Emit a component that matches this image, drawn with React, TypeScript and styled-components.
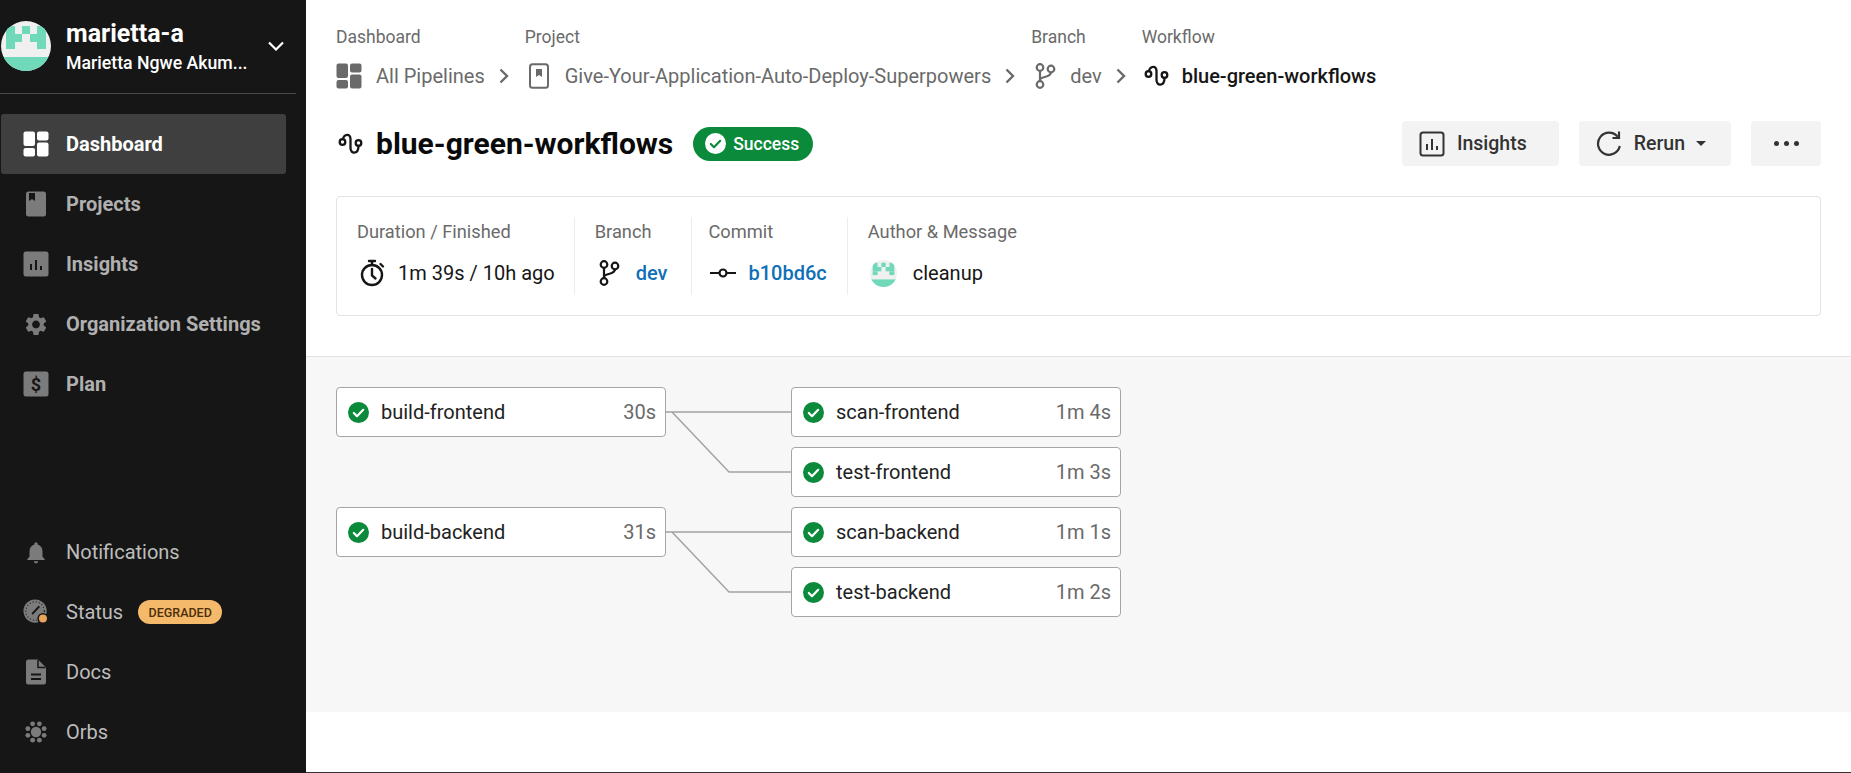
import React from 'react';
import styled, { createGlobalStyle } from 'styled-components';
import { MdNotifications, MdSettings } from 'react-icons/md';

const GREEN = '#0b8a3c';

const GlobalStyle = createGlobalStyle`
  html, body {
    margin: 0;
    padding: 0;
    height: 100%;
    background: #fff;
    overflow: hidden;
    font-family: Roboto, "Liberation Sans", sans-serif;
  }
`;

// identicon cells: [x, y, w, h] in a 50 unit box
const avatarCells = [
  [5, 5, 9, 8],
  [21, 5, 8, 8],
  [36, 5, 9, 8],
  [5, 13, 16, 8],
  [29, 13, 16, 8],
  [5, 21, 9, 7],
  [36, 21, 9, 7],
  [0, 36, 50, 14],
];

function Avatar({ size }: { size: number }) {
  return (
    <svg width={size} height={size} viewBox="0 0 50 50">
      <defs>
        <clipPath id={`av${size}`}>
          <circle cx="25" cy="25" r="25" />
        </clipPath>
      </defs>
      <g clipPath={`url(#av${size})`}>
        <rect width="50" height="50" fill="#f0f0f0" />
        {avatarCells.map(([x, y, w, h]) => (
          <rect key={`${x}-${y}`} x={x} y={y} width={w} height={h} fill="#6fd9b9" />
        ))}
      </g>
    </svg>
  );
}

function DashboardIcon({ color = 'currentColor' }: { color?: string }) {
  return (
    <svg width="26" height="26" viewBox="0 0 26 26" fill={color}>
      <rect x="0.5" y="0.5" width="11.5" height="14.5" rx="2" />
      <rect x="14" y="0.5" width="11.5" height="9" rx="2" />
      <rect x="0.5" y="17" width="11.5" height="8.5" rx="2" />
      <rect x="14" y="11.5" width="11.5" height="14" rx="2" />
    </svg>
  );
}

function ProjectsFilled() {
  return (
    <svg width="26" height="26" viewBox="0 0 26 26">
      <rect x="3" y="0.5" width="20" height="25" rx="2.5" fill="currentColor" />
      <path d="M6 2h6v8l-3-2-3 2z" fill="#161616" />
    </svg>
  );
}

function ProjectOutline() {
  return (
    <svg width="26" height="26" viewBox="0 0 26 26">
      <rect x="4" y="1.2" width="18" height="23.6" rx="2.5" fill="none" stroke="currentColor" strokeWidth="2" />
      <path d="M10 6h6v8l-3-2-3 2z" fill="currentColor" />
    </svg>
  );
}

function InsightsFilled() {
  return (
    <svg width="26" height="26" viewBox="0 0 26 26">
      <rect x="0.5" y="0.5" width="25" height="25" rx="2.5" fill="currentColor" />
      <path d="M7 13h2v6H7zM12 9h2v10h-2zM17 15h2v4h-2z" fill="#161616" />
    </svg>
  );
}

function InsightsOutline() {
  return (
    <svg width="26" height="26" viewBox="0 0 26 26" fill="currentColor">
      <rect x="1.5" y="1.5" width="23" height="23" rx="2.5" fill="none" stroke="currentColor" strokeWidth="2" />
      <path d="M7 13h2v6H7zM12 8h2v11h-2zM17 15h2v4h-2z" />
    </svg>
  );
}

function PlanIcon() {
  return (
    <svg width="26" height="26" viewBox="0 0 26 26">
      <rect x="0.5" y="0.5" width="25" height="25" rx="2.5" fill="currentColor" />
      <text x="13" y="19.5" textAnchor="middle" fontSize="18" fontWeight="700" fontFamily="Roboto, sans-serif" fill="#161616">
        $
      </text>
    </svg>
  );
}

function StatusIcon() {
  return (
    <svg width="28" height="28" viewBox="0 0 28 28">
      <circle cx="13" cy="13" r="12.5" fill="currentColor" />
      <circle cx="13" cy="13" r="10" fill="none" stroke="#161616" strokeWidth="1.2" strokeDasharray="1 2.4" />
      <path d="M10.5 15.5 17 8.5" stroke="#161616" strokeWidth="2.2" strokeLinecap="round" />
      <circle cx="21.5" cy="21" r="6" fill="#161616" />
      <circle cx="21.5" cy="21" r="4.3" fill="#e9a45a" />
    </svg>
  );
}

function DocsIcon() {
  return (
    <svg width="26" height="26" viewBox="0 0 26 26">
      <path d="M5.5 0.5H15l8 8v14.5a2.5 2.5 0 0 1-2.5 2.5H5.5A2.5 2.5 0 0 1 3 23V3a2.5 2.5 0 0 1 2.5-2.5z" fill="currentColor" />
      <path d="M15 1v7.5h7.5" fill="none" stroke="#161616" strokeWidth="1.5" />
      <path d="M8 14.5h10v2H8zM8 19h10v2H8z" fill="#161616" />
    </svg>
  );
}

function OrbsIcon() {
  const dots = [0, 1, 2, 3, 4, 5, 6, 7].map((i) => {
    const a = (i * Math.PI) / 4 + Math.PI / 8;
    return { x: 13 + 8.8 * Math.cos(a), y: 13 + 8.8 * Math.sin(a) };
  });
  return (
    <svg width="26" height="26" viewBox="0 0 26 26" fill="currentColor">
      <circle cx="13" cy="13" r="5.2" />
      {dots.map((d, i) => (
        <circle key={i} cx={d.x} cy={d.y} r="2.4" />
      ))}
    </svg>
  );
}

function BranchIcon() {
  return (
    <svg width="22" height="26" viewBox="0 0 22 26" fill="none" stroke="currentColor" strokeWidth="2.2">
      <circle cx="6" cy="4.5" r="3.3" />
      <circle cx="17" cy="6" r="3.3" />
      <circle cx="6" cy="21.5" r="3.3" />
      <path d="M6 8v10M6 17c0-4 11-2 11-7.8" />
    </svg>
  );
}

function WorkflowIcon() {
  return (
    <svg width="26" height="26" viewBox="0 0 26 26" fill="none" stroke="currentColor" strokeWidth="2.3">
      <circle cx="4.5" cy="11" r="2.8" />
      <circle cx="20.5" cy="12" r="2.8" />
      <path d="M5 8C6 3 12.5 2 12.5 8v9c0 6.5 8 6.5 8-2" strokeLinecap="round" />
    </svg>
  );
}

function TimerIcon() {
  return (
    <svg width="26" height="28" viewBox="0 0 26 28" fill="none" stroke="currentColor" strokeWidth="2.4">
      <circle cx="13" cy="16" r="10" />
      <path d="M13 10v6.5l3.5 3M10 2h6M13 2v4M21.5 5l2.5 2.5" strokeLinecap="round" />
    </svg>
  );
}

function CommitIcon() {
  return (
    <svg width="26" height="12" viewBox="0 0 26 12" fill="none" stroke="currentColor" strokeWidth="2.2">
      <circle cx="13" cy="6" r="3.5" />
      <path d="M0 6h9.5M16.5 6H26" />
    </svg>
  );
}

function RerunIcon() {
  return (
    <svg width="26" height="26" viewBox="0 0 26 26" fill="none" stroke="currentColor" strokeWidth="2.2">
      <path d="M23.8 15a11 11 0 1 1-2.2-9.2" />
      <path d="M23 0.5v6.5h-6.5" />
    </svg>
  );
}

function CheckCircle({ bg = GREEN, fg = '#fff' }: { bg?: string; fg?: string }) {
  return (
    <svg width="21" height="21" viewBox="0 0 21 21">
      <circle cx="10.5" cy="10.5" r="10.5" fill={bg} />
      <path d="M5.8 11l3.2 3.2 6.2-6.4" fill="none" stroke={fg} strokeWidth="2.2" strokeLinecap="round" strokeLinejoin="round" />
    </svg>
  );
}

function Chevron() {
  return (
    <svg width="10" height="16" viewBox="0 0 10 16" fill="none" stroke="#6a6a6a" strokeWidth="2.4">
      <path d="M1.5 1.5 8 8l-6.5 6.5" />
    </svg>
  );
}

const topNav = [
  { name: 'Dashboard', icon: <DashboardIcon />, active: true },
  { name: 'Projects', icon: <ProjectsFilled /> },
  { name: 'Insights', icon: <InsightsFilled /> },
  { name: 'Organization Settings', icon: <MdSettings size={31} /> },
  { name: 'Plan', icon: <PlanIcon /> },
];

const pipelines = [
  {
    job: { name: 'build-frontend', time: '30s' },
    next: [
      { name: 'scan-frontend', time: '1m 4s' },
      { name: 'test-frontend', time: '1m 3s' },
    ],
  },
  {
    job: { name: 'build-backend', time: '31s' },
    next: [
      { name: 'scan-backend', time: '1m 1s' },
      { name: 'test-backend', time: '1m 2s' },
    ],
  },
];

function Job({ name, time }: { name: string; time: string }) {
  return (
    <Node>
      <CheckCircle />
      <NodeName>{name}</NodeName>
      <NodeTime>{time}</NodeTime>
    </Node>
  );
}

export default function App() {
  return (
    <Page>
      <GlobalStyle />
      <Sidebar>
        <div>
          <OrgHeader>
            <Avatar size={50} />
            <OrgText>
              <OrgName>marietta-a</OrgName>
              <OrgUser>Marietta Ngwe Akum...</OrgUser>
            </OrgText>
            <OrgChevron width="16" height="10" viewBox="0 0 16 10" fill="none" stroke="#fff" strokeWidth="2.2">
              <path d="M1 1.5l7 7 7-7" />
            </OrgChevron>
          </OrgHeader>
          <nav>
            {topNav.map((item) => (
              <NavItem key={item.name} $active={item.active}>
                <NavIcon $active={item.active}>{item.icon}</NavIcon>
                {item.name}
              </NavItem>
            ))}
          </nav>
        </div>
        <nav>
          <NavItem $light>
            <NavIcon><MdNotifications size={31} /></NavIcon>
            Notifications
          </NavItem>
          <NavItem $light>
            <NavIcon><StatusIcon /></NavIcon>
            Status
            <Degraded>DEGRADED</Degraded>
          </NavItem>
          <NavItem $light>
            <NavIcon><DocsIcon /></NavIcon>
            Docs
          </NavItem>
          <NavItem $light>
            <NavIcon><OrbsIcon /></NavIcon>
            Orbs
          </NavItem>
        </nav>
      </Sidebar>

      <Main>
        <Header>
          <Crumbs>
            <Crumb>
              <CrumbLabel>Dashboard</CrumbLabel>
              <CrumbValue>
                <DashboardIcon />
                All Pipelines
                <Chevron />
              </CrumbValue>
            </Crumb>
            <Crumb>
              <CrumbLabel>Project</CrumbLabel>
              <CrumbValue>
                <IconShift $by={1}>
                  <ProjectOutline />
                </IconShift>
                <ValueText $back={1}>Give-Your-Application-Auto-Deploy-Superpowers</ValueText>
                <Chevron />
              </CrumbValue>
            </Crumb>
            <Crumb>
              <CrumbLabel>Branch</CrumbLabel>
              <CrumbValue>
                <IconShift $by={3}>
                  <BranchIcon />
                </IconShift>
                dev
                <Chevron />
              </CrumbValue>
            </Crumb>
            <Crumb>
              <CrumbLabel>Workflow</CrumbLabel>
              <CrumbValue $current>
                <IconShift $by={2}>
                  <WorkflowIcon />
                </IconShift>
                <ValueText $back={2}>blue-green-workflows</ValueText>
              </CrumbValue>
            </Crumb>
          </Crumbs>

          <TitleRow>
            <TitleGroup>
              <IconShift $by={2}>
                <WorkflowIcon />
              </IconShift>
              <Title>blue-green-workflows</Title>
              <Badge>
                <CheckCircle bg="#fff" fg={GREEN} />
                Success
              </Badge>
            </TitleGroup>
            <Actions>
              <ActionButton $right={32}>
                <InsightsOutline />
                Insights
              </ActionButton>
              <ActionButton $right={25}>
                <RerunIcon />
                Rerun
                <Caret />
              </ActionButton>
              <MoreButton>
                <Dot />
                <Dot />
                <Dot />
              </MoreButton>
            </Actions>
          </TitleRow>

          <InfoCard>
            <InfoCell $right={19}>
              <InfoLabel>Duration / Finished</InfoLabel>
              <InfoValue $gap={13}>
                <IconShift $by={2}>
                  <TimerIcon />
                </IconShift>
                1m 39s / 10h ago
              </InfoValue>
            </InfoCell>
            <InfoCell $right={24}>
              <InfoLabel>Branch</InfoLabel>
              <InfoValue $gap={16}>
                <IconShift $by={3}>
                  <BranchIcon />
                </IconShift>
                <InfoLink>dev</InfoLink>
              </InfoValue>
            </InfoCell>
            <InfoCell $left={16}>
              <InfoLabel>Commit</InfoLabel>
              <InfoValue $gap={12}>
                <IconShift $by={2}>
                  <CommitIcon />
                </IconShift>
                <InfoLink>b10bd6c</InfoLink>
              </InfoValue>
            </InfoCell>
            <InfoCell>
              <InfoLabel>Author &amp; Message</InfoLabel>
              <InfoValue $gap={16}>
                <IconShift $by={2}>
                  <Avatar size={27} />
                </IconShift>
                cleanup
              </InfoValue>
            </InfoCell>
          </InfoCard>
        </Header>

        <Graph>
          {pipelines.map((p) => (
            <Pipeline key={p.job.name}>
              <Job name={p.job.name} time={p.job.time} />
              <svg width="125" height="110" viewBox="0 0 125 110" fill="none" stroke="#a3a3a3" strokeWidth="1.5">
                <path d="M0 25h125M6 25l57 60h62" />
              </svg>
              <NextJobs>
                {p.next.map((n) => (
                  <Job key={n.name} name={n.name} time={n.time} />
                ))}
              </NextJobs>
            </Pipeline>
          ))}
        </Graph>
        <Footer />
      </Main>
    </Page>
  );
}

const Page = styled.div`
  display: flex;
  width: 1851px;
  height: 773px;
`;

const Sidebar = styled.aside`
  width: 306px;
  flex: none;
  background: #161616;
  display: flex;
  flex-direction: column;
  justify-content: space-between;
  padding-bottom: 11px;
  box-sizing: border-box;
`;

const OrgHeader = styled.div`
  display: flex;
  align-items: center;
  width: 296px;
  height: 94px;
  box-sizing: border-box;
  padding-left: 1px;
  padding-bottom: 1px;
  margin-bottom: 20px;
  border-bottom: 1px solid #4a4a4a;
`;

const OrgText = styled.div`
  margin-left: 15px;
  padding-top: 1px;
  flex: 1;
  display: flex;
  flex-direction: column;
  gap: 3px;
  color: #fff;
`;

const OrgName = styled.div`
  font-size: 25px;
  line-height: 30px;
  font-weight: 700;
`;

const OrgUser = styled.div`
  font-size: 17.7px;
  line-height: 22px;
  font-weight: 500;
`;

const OrgChevron = styled.svg`
  margin-right: 12px;
`;

const NavItem = styled.div<{ $active?: boolean; $light?: boolean }>`
  display: flex;
  align-items: center;
  width: 285px;
  height: 60px;
  margin-left: 1px;
  padding-left: 22px;
  box-sizing: border-box;
  border-radius: 3px;
  font-size: 20px;
  font-weight: ${(p) => (p.$light ? 400 : 700)};
  color: ${(p) => (p.$active ? '#fff' : p.$light ? '#bdbdbd' : '#b0b0b0')};
  background: ${(p) => (p.$active ? '#3f3f3f' : 'transparent')};
`;

const NavIcon = styled.span<{ $active?: boolean }>`
  width: 26px;
  height: 26px;
  margin-right: 17px;
  flex: none;
  display: flex;
  align-items: center;
  justify-content: center;
  color: ${(p) => (p.$active ? '#fff' : '#7b7b7b')};
`;

const Degraded = styled.span`
  margin-left: 15px;
  height: 24px;
  width: 84px;
  border-radius: 12px;
  background: #f5b96b;
  color: #4b2f0c;
  font-size: 12.5px;
  font-weight: 500;
  display: flex;
  align-items: center;
  justify-content: center;
`;

const Main = styled.main`
  flex: 1;
  min-width: 0;
  display: flex;
  flex-direction: column;
`;

const Header = styled.header`
  height: 357px;
  flex: none;
  padding: 0 30px;
  box-sizing: border-box;
  border-bottom: 1px solid #e3e3e3;
`;

const Crumbs = styled.div`
  display: flex;
  padding-top: 26px;
  gap: 16px;
`;

const Crumb = styled.div`
  display: flex;
  flex-direction: column;
  gap: 15px;
`;

const CrumbLabel = styled.div`
  font-size: 17.5px;
  line-height: 22px;
  color: #6a6a6a;
`;

const CrumbValue = styled.div<{ $current?: boolean }>`
  display: flex;
  align-items: center;
  gap: 14px;
  height: 26px;
  font-size: 20px;
  font-weight: ${(p) => (p.$current ? 500 : 400)};
  color: ${(p) => (p.$current ? '#161616' : '#6a6a6a')};
`;

const ValueText = styled.span<{ $back: number }>`
  margin-left: -${(p) => p.$back}px;
`;

const IconShift = styled.span<{ $by: number }>`
  display: flex;
  margin-left: ${(p) => p.$by}px;
`;

const TitleRow = styled.div`
  display: flex;
  align-items: center;
  justify-content: space-between;
  margin-top: 32px;
  height: 45px;
`;

const TitleGroup = styled.div`
  display: flex;
  align-items: center;
  gap: 12px;
  color: #161616;
`;

const Title = styled.h1`
  margin: 0;
  font-size: 30px;
  font-weight: 700;
  color: #0a0a0a;
`;

const Badge = styled.span`
  display: flex;
  align-items: center;
  gap: 7px;
  margin-left: 8px;
  height: 34px;
  padding: 0 14px 0 12px;
  border-radius: 17px;
  background: ${GREEN};
  color: #fff;
  font-size: 17.5px;
  font-weight: 500;
`;

const Actions = styled.div`
  display: flex;
  gap: 20px;
`;

const ActionButton = styled.button<{ $right: number }>`
  display: flex;
  align-items: center;
  gap: 12px;
  height: 45px;
  padding: 0 ${(p) => p.$right}px 0 17px;
  border: none;
  border-radius: 4px;
  background: #f3f3f3;
  color: #333;
  font-family: inherit;
  font-size: 19.5px;
  font-weight: 500;
`;

const Caret = styled.span`
  width: 0;
  height: 0;
  margin-left: -1px;
  border-left: 5px solid transparent;
  border-right: 5px solid transparent;
  border-top: 5px solid #333;
`;

const MoreButton = styled.button`
  display: flex;
  align-items: center;
  justify-content: center;
  gap: 5px;
  width: 70px;
  height: 45px;
  border: none;
  border-radius: 4px;
  background: #f3f3f3;
`;

const Dot = styled.span`
  width: 5px;
  height: 5px;
  border-radius: 50%;
  background: #333;
`;

const InfoCard = styled.section`
  display: flex;
  height: 120px;
  margin-top: 30px;
  padding: 20px 0;
  box-sizing: border-box;
  border: 1px solid #e3e3e3;
  border-radius: 4px;
`;

const InfoCell = styled.div<{ $left?: number; $right?: number }>`
  display: flex;
  flex-direction: column;
  gap: 15px;
  padding: 4px ${(p) => p.$right ?? 20}px 0 ${(p) => p.$left ?? 20}px;
  border-right: 1px solid #ececec;
  &:last-child {
    border-right: none;
  }
`;

const InfoLabel = styled.div`
  font-size: 18.25px;
  line-height: 22px;
  color: #6a6a6a;
`;

const InfoValue = styled.div<{ $gap: number }>`
  display: flex;
  align-items: center;
  gap: ${(p) => p.$gap}px;
  height: 30px;
  font-size: 20px;
  color: #161616;
`;

const InfoLink = styled.span`
  color: #0f6fb8;
  font-weight: 500;
`;

const Graph = styled.section`
  height: 355px;
  flex: none;
  box-sizing: border-box;
  padding: 30px;
  background: #f7f7f7;
  display: flex;
  flex-direction: column;
  gap: 10px;
`;

const Pipeline = styled.div`
  display: flex;
  align-items: flex-start;
`;

const NextJobs = styled.div`
  display: flex;
  flex-direction: column;
  gap: 10px;
`;

const Node = styled.div`
  display: flex;
  align-items: center;
  width: 330px;
  height: 50px;
  padding: 0 9px 0 11px;
  box-sizing: border-box;
  background: #fff;
  border: 1px solid #a5a5a5;
  border-radius: 4px;
`;

const NodeName = styled.span`
  flex: 1;
  margin-left: 12px;
  font-size: 20px;
  color: #222;
`;

const NodeTime = styled.span`
  font-size: 20px;
  color: #6a6a6a;
`;

const Footer = styled.div`
  flex: 1;
  background: #fff;
  border-bottom: 1px solid #333;
`;
